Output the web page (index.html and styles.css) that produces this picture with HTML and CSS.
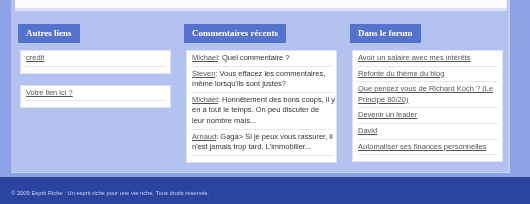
FILE: index.html
```html
<!DOCTYPE html>
<html lang="fr">
<head>
<meta charset="utf-8">
<title>Esprit Riche</title>
<link rel="stylesheet" href="styles.css">
</head>
<body>
<div class="page">
  <div class="panel">
    <div class="topbox"></div>
    <div class="columns">
      <div class="col">
        <h3 class="heading">Autres liens</h3>
        <ul class="box">
          <li><a href="#">credit</a></li>
        </ul>
        <ul class="box box-gap">
          <li><a href="#">Votre lien ici ?</a></li>
        </ul>
      </div>
      <div class="col">
        <h3 class="heading">Commentaires récents</h3>
        <ul class="box">
          <li><a href="#">Michael</a>: Quel commentaire ?</li>
          <li><a href="#">Steven</a>: Vous effacez les commentaires,<br>même lorsqu'ils sont justes?</li>
          <li><a href="#">Michael</a>: Honnêtement des bons coups, il y<br>en a tout le temps. On peu discuter de<br>leur nombre mais...</li>
          <li><a href="#">Arnaud</a>: Gaga&gt; Si je peux vous rassurer, il<br>n'est jamais trop tard. L'immobilier...</li>
        </ul>
      </div>
      <div class="col">
        <h3 class="heading">Dans le forum</h3>
        <ul class="box">
          <li><a href="#">Avoir un salaire avec mes intérêts</a></li>
          <li><a href="#">Refonte du thème du blog</a></li>
          <li><a href="#">Que pensez vous de Richard Koch ? (Le<br>Principe 80/20)</a></li>
          <li><a href="#">Devenir un leader</a></li>
          <li><a href="#">David</a></li>
          <li><a href="#">Automatiser ses finances personnelles</a></li>
        </ul>
      </div>
    </div>
  </div>
  <div class="footer">© 2009 Esprit Riche : Un esprit riche pour une vie riche. Tous droits réservés.</div>
</div>
</body>
</html>
```

FILE: styles.css
```css
html, body {
  margin: 0;
  padding: 0;
}
body {
  background: #8ea3e7;
  font-family: "Liberation Sans", Arial, sans-serif;
  width: 530px;
  height: 204px;
  overflow: hidden;
  -webkit-font-smoothing: antialiased;
}
.page {
  display: flex;
  flex-direction: column;
}
.panel {
  margin: 0 20px 0 11px;
  background: #b3c2f1;
  border-right: 2px solid #c3cff5;
  border-bottom: 1px solid #c8d3f6;
  padding-bottom: 9px;
}
.topbox {
  margin: 0 1px 0 4px;
  height: 8px;
  background: #fbfbfd;
  border-bottom: 3px solid #dbe3f8;
}
.columns {
  display: flex;
  gap: 11px;
  padding: 13px 0 0 7px;
  will-change: transform;
}
.col {
  width: 155px;
  display: flex;
  flex-direction: column;
  align-items: flex-start;
}
.heading {
  margin: 0;
  background: #5672cf;
  color: #fff;
  font-family: "Liberation Serif", "Times New Roman", serif;
  font-weight: bold;
  font-size: 9px;
  line-height: 19px;
  padding: 0 8px;
}
.box {
  list-style: none;
  margin: 7px 2px 0;
  align-self: stretch;
  background: #fff;
  border: 1px solid #dde2ee;
  padding: 0 4px 6px;
  font-size: 7.5px;
  line-height: 10.6px;
  color: #333;
}
.box-gap {
  margin-top: 11px;
}
.box li {
  padding: 2px 1px;
  border-bottom: 1px solid #e6e6e6;
  white-space: nowrap;
}
.box a {
  color: #555;
  text-decoration: underline;
}
.footer {
  margin-top: 4px;
  background: #2a449f;
  height: 30px;
  padding: 13px 0 0 11px;
  box-sizing: border-box;
  color: #c9d2f0;
  font-size: 5.8px;
  line-height: 7px;
  will-change: transform;
}
```
